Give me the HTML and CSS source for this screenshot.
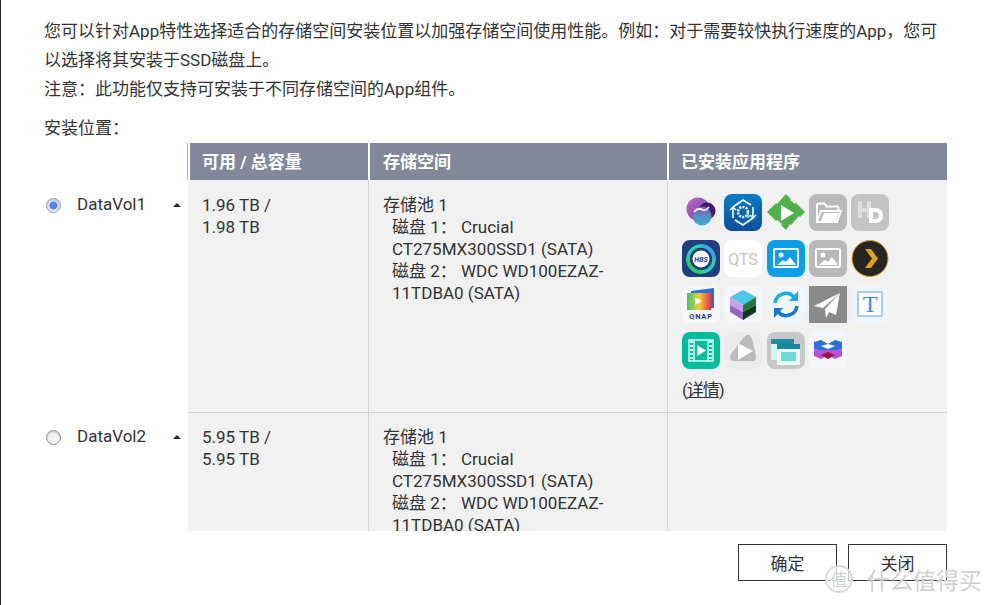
FILE: index.html
```html
<!DOCTYPE html>
<html lang="zh-CN">
<head>
<meta charset="utf-8">
<title>存储空间</title>
<link rel="stylesheet" href="styles.css">
</head>
<body>
<div class="dialog">
  <div class="intro">
    <p>您可以针对App特性选择适合的存储空间安装位置以加强存储空间使用性能。例如：对于需要较快执行速度的App，您可以选择将其安装于SSD磁盘上。</p>
    <p>注意：此功能仅支持可安装于不同存储空间的App组件。</p>
  </div>
  <div class="label">安装位置：</div>
  <div class="viewport">
    <div class="grid">
      <div class="corner"></div>
      <div class="head">可用 / 总容量</div>
      <div class="head head-pool">存储空间</div>
      <div class="head">已安装应用程序</div>

      <div class="vol">
        <span class="radio radio-on"></span><span class="vol-name">DataVol1</span><span class="caret"></span>
      </div>
      <div class="cell cell-cap">1.96 TB /<br>1.98 TB</div>
      <div class="cell">存储池 1<div class="disks">磁盘 1： Crucial CT275MX300SSD1 (SATA)<br>磁盘 2： WDC WD100EZAZ-11TDBA0 (SATA)</div></div>
      <div class="cell cell-apps">
        <div class="apps">
          <svg class="app" viewBox="0 0 38 37"><defs><linearGradient id="a1" x1="0" y1="0" x2="1" y2="1"><stop offset="0" stop-color="#c868b8"/><stop offset="1" stop-color="#5a40c0"/></linearGradient><linearGradient id="a1b" x1="0" y1="0" x2="0" y2="1"><stop offset="0" stop-color="#8a58b8"/><stop offset="1" stop-color="#30b8d0"/></linearGradient></defs><rect width="38" height="37" rx="8" fill="#f0f0f2"/><circle cx="16" cy="15" r="11.500" fill="url(#a1)"/><circle cx="25" cy="17" r="8.500" fill="#3c1c70"/><circle cx="20" cy="22" r="9.500" fill="url(#a1b)"/><path d="M12 18q4-5 9-2 3 1 6-3" stroke="#fff" stroke-width="1.500" fill="none"/></svg>
          <svg class="app" viewBox="0 0 38 37"><defs><linearGradient id="a2" x1="0" y1="0" x2="0" y2="1"><stop offset="0" stop-color="#0a7cc8"/><stop offset="1" stop-color="#0a4f9c"/></linearGradient></defs><rect width="38" height="37" rx="8" fill="url(#a2)"/><path d="M9 13l10-7 8 5M29 24l-10 7-8-5" stroke="#fff" stroke-width="1.800" fill="none"/><path d="M9 13v11M29 13v11" stroke="#d8f0ff" stroke-width="1.800"/><path d="M6 16l3-3 3 3M26 21l3 3 3-3" stroke="#fff" stroke-width="1.500" fill="none"/><circle cx="19" cy="18" r="5" fill="none" stroke="#fff" stroke-width="2.500" stroke-dasharray="2 1.200"/><circle cx="24" cy="22" r="2" fill="#8fd0f0"/></svg>
          <svg class="app" viewBox="0 0 38 37"><path d="M19 0l5 5-1 1 5 4 1-1 9 9-5 5-1-1-8 9-1-1-4 6-5-5 1-1-5-4-1 1-9-9 9-9 1 1z" fill="#4fb14b"/><path d="M14 11l13 8-13 8z" fill="#fff"/></svg>
          <svg class="app" viewBox="0 0 38 37"><rect width="38" height="37" rx="8" fill="#b9b9b9"/><path d="M8 28V11a1.500 1.500 0 0 1 1.500-1.500h6l2 3h11a1 1 0 0 1 1 1V16" fill="none" stroke="#fff" stroke-width="1.800"/><path d="M8 28l4-11h20l-4 11z" fill="none" stroke="#fff" stroke-width="1.800"/><path d="M12 27l3-8h15l-3 8z" fill="#fff"/></svg>
          <svg class="app" viewBox="0 0 38 37"><rect width="38" height="37" rx="8" fill="#c4c4c4"/><path d="M7 7h4v7h5V7h4v17h-4v-6h-5v6H7z" fill="#dedede"/><path d="M18 14h6q8 0 8 7.500T24 29h-6zm4 4v7h2q4 0 4-3.500T24 18z" fill="#fff"/></svg>

          <svg class="app" viewBox="0 0 38 37"><rect width="38" height="37" rx="8" fill="#1f3d83"/><circle cx="19" cy="19" r="13" fill="none" stroke="#2bd0a8" stroke-width="3.500"/><path d="M19 6a13 13 0 0 1 13 13" fill="none" stroke="#35a8e0" stroke-width="3.500"/><path d="M6 19a13 13 0 0 0 13 13" fill="none" stroke="#26d060" stroke-width="3.500"/><circle cx="19" cy="19" r="8.500" fill="#fff"/><text x="19" y="22" class="hbs">HBS</text></svg>
          <svg class="app" viewBox="0 0 38 37"><rect width="38" height="37" rx="8" fill="#fff"/><text x="19" y="25" class="qts">QTS</text></svg>
          <svg class="app" viewBox="0 0 38 37"><rect width="38" height="37" rx="8" fill="#0a9fe8"/><rect x="7" y="9" width="24" height="18" rx="1" fill="none" stroke="#fff" stroke-width="2"/><circle cx="14" cy="15" r="2.500" fill="#fff"/><path d="M10 25l6-5 3 2 4-5 6 8z" fill="#fff"/></svg>
          <svg class="app" viewBox="0 0 38 37"><rect width="38" height="37" rx="8" fill="#b9b9b9"/><rect x="7" y="9" width="24" height="18" rx="1" fill="none" stroke="#fff" stroke-width="2"/><circle cx="14" cy="15" r="2.500" fill="#fff"/><path d="M10 25l6-5 3 2 4-5 6 8z" fill="#fff"/></svg>
          <svg class="app" viewBox="0 0 38 37"><circle cx="19" cy="18.500" r="18" fill="#252525" stroke="#e0a010" stroke-width="1"/><path d="M14 9h6l7 9.500L20 28h-6l7-9.500z" fill="#e5a00d"/></svg>

          <svg class="app" viewBox="0 0 38 37"><defs><linearGradient id="a3" x1="0" y1="0" x2="1" y2="0"><stop offset="0" stop-color="#3cc870"/><stop offset=".5" stop-color="#f0d030"/><stop offset="1" stop-color="#e83050"/></linearGradient></defs><rect width="38" height="37" rx="8" fill="#f4f8fb"/><path d="M9 5l23-3v20l-23 2z" fill="#2a70d8"/><path d="M5 7h24v17H5z" fill="url(#a3)"/><path d="M13 11l7 4-7 4z" fill="#fff"/><text x="19" y="33" class="qnap">QNAP</text></svg>
          <svg class="app" viewBox="0 0 38 37"><rect width="38" height="37" rx="8" fill="#f4f6fb"/><path d="M19 4l13 7-13 8-13-8z" fill="#4dc8e8"/><path d="M6 11l13 8v7l-13-7z" fill="#c8a0e8"/><path d="M32 11l-13 8v7l13-7z" fill="#1f7a3c"/><path d="M6 19l13 7v8l-13-8z" fill="#9068c0"/><path d="M32 19l-13 7v8l13-8z" fill="#0c3a1c"/></svg>
          <svg class="app" viewBox="0 0 38 37"><rect width="38" height="37" rx="8" fill="#f0f6fa"/><path d="M8 17a11 11 0 0 1 19-6" fill="none" stroke="#18b0e0" stroke-width="3.500"/><path d="M31 5v10h-9z" fill="#18b0e0"/><path d="M30 20a11 11 0 0 1-19 6" fill="none" stroke="#1878d0" stroke-width="3.500"/><path d="M7 32V22h9z" fill="#1878d0"/></svg>
          <svg class="app" viewBox="0 0 38 37"><rect width="38" height="37" fill="#8a8a8a"/><path d="M31 7L5 20l9 2z" fill="#fff"/><path d="M31 7L16 23l1 9 3-6 7 3z" fill="#fff"/></svg>
          <svg class="app" viewBox="0 0 38 37"><rect width="38" height="37" rx="8" fill="#f0f4fb"/><rect x="7" y="6" width="24" height="24" fill="#fff" stroke="#8cc0f0" stroke-width="1.500"/><text x="19" y="26" class="tee">T</text></svg>

          <svg class="app" viewBox="0 0 38 37"><rect width="38" height="37" rx="8" fill="#00bd9c"/><rect x="7" y="8" width="24" height="21" fill="none" stroke="#d8fff4" stroke-width="1.500"/><path d="M12 8v21M26 8v21" stroke="#d8fff4" stroke-width="1.500"/><path d="M9.500 9v19M28.500 9v19" stroke="#d8fff4" stroke-width="3" stroke-dasharray="2 2"/><path d="M15 13l9 5.500-9 5.500z" fill="#fff"/></svg>
          <svg class="app" viewBox="0 0 38 37"><rect width="38" height="37" rx="8" fill="#ececec"/><path d="M24 3q3 0 4 4l4 17q1 5-4 5l-18 0q-6-1-3-7L20 5q2-2 4-2z" fill="#bcbcbc"/><path d="M14 11l15 8-15 9z" fill="#fff"/></svg>
          <svg class="app" viewBox="0 0 38 37"><rect width="38" height="37" rx="8" fill="#c8c8c8"/><rect x="4" y="7" width="23" height="21" fill="#d8f4f4"/><rect x="4" y="7" width="23" height="5" fill="#1f8ca8"/><rect x="10" y="12" width="23" height="21" fill="#e8fafa"/><rect x="10" y="12" width="23" height="5" fill="#1888a0"/><rect x="14" y="20" width="15" height="9" fill="#6cdcd8"/></svg>
          <svg class="app" viewBox="0 0 38 37"><rect width="38" height="37" rx="8" fill="#f2f6fb"/><path d="M5 10l7-2 7 4 7-4 7 2v7l-7 2H12l-7-2z" fill="#2a70e0"/><path d="M5 17l7 1h14l7-1v7l-7 3-7-4-7 4-7-3z" fill="#b850d8"/><path d="M12 23l7-3 7 3-7 4z" fill="#a01040"/><path d="M12 14l7 3 7-3-7-2z" fill="#fff"/></svg>
        </div>
        <div class="detail">(<span class="detail-link">详情</span>)</div>
      </div>

      <div class="vol vol-b">
        <span class="radio"></span><span class="vol-name">DataVol2</span><span class="caret"></span>
      </div>
      <div class="cell cell-cap cell-b">5.95 TB /<br>5.95 TB</div>
      <div class="cell cell-b">存储池 1<div class="disks">磁盘 1： Crucial CT275MX300SSD1 (SATA)<br>磁盘 2： WDC WD100EZAZ-11TDBA0 (SATA)</div></div>
      <div class="cell cell-apps cell-b"></div>
    </div>
  </div>
  <div class="actions">
    <button class="btn" type="button">确定</button>
    <button class="btn" type="button">关闭</button>
  </div>
</div>
<div class="watermark"><span class="wm-circle">值</span><span class="wm-text">什么值得买</span></div>
</body>
</html>
```

FILE: styles.css
```css
* { box-sizing: border-box; }
html, body { margin: 0; height: 100%; overflow: hidden; background: #fff; }
body {
  font-family: Roboto, "Noto Sans CJK SC", sans-serif;
  font-size: 17px;
  color: #333;
  position: relative;
}
.dialog {
  height: 605px;
  border-left: 1px solid #222;
  padding: 17px 44px 0 43px;
  display: flex;
  flex-direction: column;
}
.intro p { margin: 0; line-height: 29px; }
.label { margin-top: 10px; line-height: 29px; }
.viewport { height: 388px; overflow: hidden; }
.grid {
  display: grid;
  grid-template-columns: 144px 180px 299px 280px;
  width: 903px;
}
.corner { height: 37px; }
.head {
  height: 37px;
  background: #828899;
  color: #fff;
  font-weight: 700;
  line-height: 39px;
  padding-left: 12px;
  border-left: 2px solid #fff;
}
.head-pool { padding-left: 13px; }
.grid > .head:nth-child(2) { border-left-color: #fff; box-shadow: -1px 0 0 #b0b4c0; }
.vol {
  display: flex;
  align-items: flex-start;
  padding: 13px 0 0 2px;
  height: 233px;
  line-height: 22px;
}
.vol-b { padding-top: 12px; }
.radio {
  width: 15px;
  height: 15px;
  margin-top: 5px;
  border-radius: 50%;
  border: 1px solid #8d8d8d;
  background: #f4f4f4;
  box-shadow: inset 0 1px 2px #bbb;
  flex: none;
}
.radio-on {
  background: radial-gradient(circle, #4f86f0 0 3.500px, #e4e8f2 4.500px);
  border-color: #a0a0a0;
}
.vol-name { margin-left: 16px; width: 96px; }
.caret {
  width: 0;
  height: 0;
  margin-top: 10px;
  border: 4px solid transparent;
  border-top: 0;
  border-bottom: 4px solid #222;
}
.cell {
  background: #f1f1f1;
  border-left: 1px solid #d6d6d6;
  border-bottom: 1px solid #d4d4d4;
  padding: 14px 20px 0 14px;
  line-height: 22px;
  height: 233px;
}
.cell-b { padding-top: 13px; }
.cell-cap { border-left: 0; padding-left: 14px; }
.disks { padding-left: 9px; }
.cell-apps { padding: 14px 0 0 14px; }
.apps {
  display: grid;
  grid-template-columns: repeat(5, 38px);
  column-gap: 4.300px;
  row-gap: 9px;
  width: 210px;
}
.app { width: 38px; height: 37px; display: block; }
.detail { margin-top: 10px; letter-spacing: -1px; }
.detail-link { text-decoration: underline; }
.hbs { font: italic 700 7px Roboto, sans-serif; fill: #1f3d83; text-anchor: middle; }
.qts { font: 400 16px Roboto, sans-serif; fill: #c4c4c4; text-anchor: middle; }
.qnap { font: 700 7.500px Roboto, sans-serif; fill: #26407a; text-anchor: middle; letter-spacing: .8px; }
.tee { font: 400 24px "Liberation Serif", serif; fill: #3a90e0; text-anchor: middle; }
.actions {
  display: flex;
  justify-content: flex-end;
  gap: 11px;
  margin-top: 13px;
}
.btn {
  width: 99px;
  height: 37px;
  background: #fff;
  border: 1px solid #333;
  font: 17px Roboto, "Noto Sans CJK SC", sans-serif;
  color: #333;
  padding: 0;
}
.watermark {
  position: absolute;
  left: 825px;
  top: 565px;
  display: flex;
  align-items: center;
  gap: 14px;
  color: rgba(200, 200, 200, .85);
  font-family: "Noto Sans CJK SC", sans-serif;
  text-shadow: 0 0 2px #fff;
}
.wm-circle {
  width: 28px;
  height: 28px;
  border-radius: 50%;
  border: 2px solid rgba(215, 215, 215, .9);
  background: rgba(255, 255, 255, .7);
  font-size: 17px;
  line-height: 24px;
  text-align: center;
}
.wm-text { font-size: 23px; line-height: 28px; white-space: nowrap; }
```
